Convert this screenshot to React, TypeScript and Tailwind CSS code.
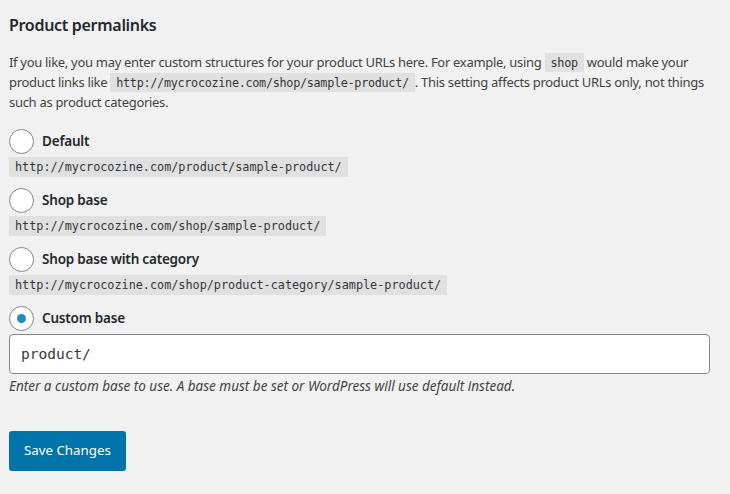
import React from "react";

const sans = "font-['Noto_Sans','Open_Sans',sans-serif]";
const mono = "font-['DejaVu_Sans_Mono','Liberation_Mono',monospace]";

const options = [
  { label: "Default", url: "http://mycrocozine.com/product/sample-product/" },
  { label: "Shop base", url: "http://mycrocozine.com/shop/sample-product/" },
  { label: "Shop base with category", url: "http://mycrocozine.com/shop/product-category/sample-product/" },
];

function Radio({ checked = false }: { checked?: boolean }) {
  return (
    <span className="flex size-[25px] shrink-0 items-center justify-center rounded-full border border-[#7e8993] bg-white">
      {checked && <span className="size-[9px] rounded-full bg-[#1e8cbe]" />}
    </span>
  );
}

function Code({ children }: { children: React.ReactNode }) {
  return (
    <code className={`${mono} bg-[#e0e0e0] px-[6px] pt-[3px] pb-[2px] text-[11.8px] leading-[15px] text-[#32373c]`}>
      {children}
    </code>
  );
}

export default function App() {
  return (
    <div className={`${sans} min-h-[494px] w-[730px] bg-[#f1f1f1] pl-[9px] pr-3 pt-[13px] text-[13px] text-[#444]`}>
      <h2 className="text-[16px] font-semibold leading-[24px] tracking-[-0.3px] text-[#23282d]">Product permalinks</h2>

      <p className="mt-[15px] leading-[20px] tracking-[-0.3px]">
        If you like, you may enter custom structures for your product URLs here. For example, using <Code>shop</Code> would make your
        <br />
        product links like <Code>http://mycrocozine.com/shop/sample-product/</Code>. This setting affects product URLs only, not things
        <br />
        such as product categories.
      </p>

      <div className="mt-[17px] flex flex-col gap-[11px]">
        {options.map((o) => (
          <div key={o.label} className="flex flex-col items-start gap-[3px]">
            <label className="flex items-center gap-2">
              <Radio />
              <span className="text-[13.5px] font-semibold tracking-[-0.2px] text-[#23282d]">{o.label}</span>
            </label>
            <div className="flex h-[20px] items-center">
              <Code>{o.url}</Code>
            </div>
          </div>
        ))}

        <div className="flex flex-col gap-[3px]">
          <label className="flex items-center gap-2">
            <Radio checked />
            <span className="text-[13.5px] font-semibold tracking-[-0.2px] text-[#23282d]">Custom base</span>
          </label>
          <input
            readOnly
            value="product/"
            className={`${mono} h-[40px] w-[701px] rounded-[4px] border border-[#7e8993] bg-white px-[11px] text-[14.5px] text-[#32373c] outline-none`}
          />
          <p className="-mt-[1px] text-[13.5px] italic leading-[20px] text-[#444]">
            Enter a custom base to use. A base must be set or WordPress will use default instead.
          </p>
        </div>
      </div>

      <button className="mt-[35px] h-[40px] rounded-[3px] bg-[#0073aa] px-[15px] text-[13.3px] text-white">
        Save Changes
      </button>
    </div>
  );
}
